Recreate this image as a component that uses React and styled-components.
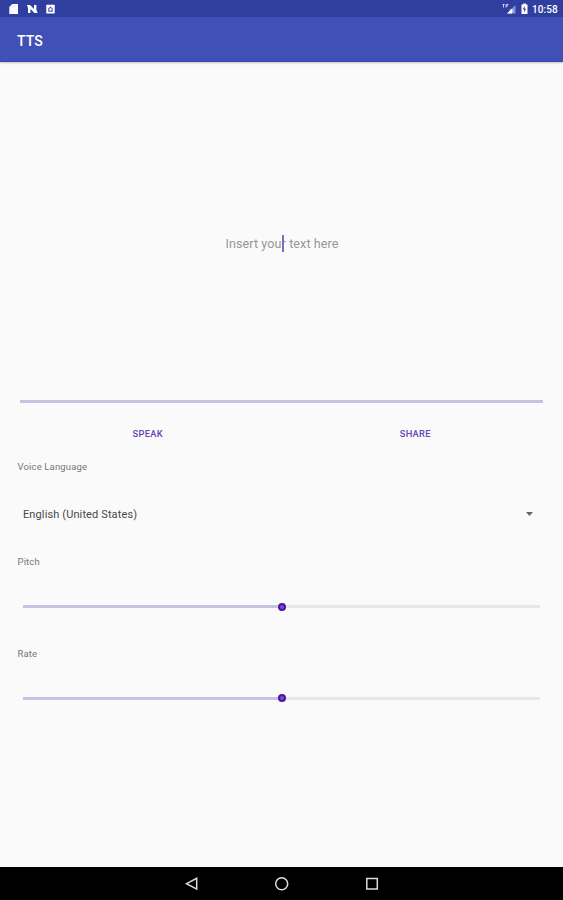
import React from "react";
import styled, { createGlobalStyle } from "styled-components";

const GlobalStyle = createGlobalStyle`
  * { box-sizing: border-box; }
  body { margin: 0; background: #fafafa; font-family: Roboto, sans-serif; }
`;

const Screen = styled.div`
  display: flex;
  flex-direction: column;
  width: 563px;
  height: 900px;
  overflow: hidden;
  background: #fafafa;
`;

const StatusBar = styled.header`
  display: flex;
  justify-content: space-between;
  height: 17px;
  background: #303f9f;
  color: #fff;
`;

const StatusIcons = styled.svg`
  display: block;
  width: ${(p) => p.$width}px;
  height: 17px;
`;

const StatusRight = styled.div`
  display: flex;
  padding-right: 5px;
`;

const Clock = styled.span`
  width: 26px;
  font-size: 10px;
  font-weight: 500;
  line-height: 19px;
  letter-spacing: 0.05px;
  white-space: nowrap;
`;

const AppBar = styled.div`
  height: 45px;
  padding-left: 17px;
  background: #3f51b5;
  border-bottom: 1px solid #3548ae;
  box-shadow: 0 1px 2px rgba(0, 0, 0, 0.22);
`;

const Title = styled.h1`
  margin: 0;
  color: #fff;
  font-size: 14px;
  font-weight: 500;
  line-height: 48px;
  letter-spacing: 0.1px;
`;

const Content = styled.main`
  display: flex;
  flex-direction: column;
  flex: 1;
`;

const Editor = styled.div`
  display: flex;
  align-items: center;
  justify-content: center;
  height: 341px;
  margin: 0 20px;
  padding-top: 25px;
  border-bottom: 3px solid #c7c1e2;
`;

const Placeholder = styled.div`
  position: relative;
  margin-left: 1px;
  color: #969696;
  font-size: 12.5px;
  line-height: 18px;
  letter-spacing: 0.12px;
  white-space: nowrap;
`;

const Caret = styled.span`
  position: absolute;
  left: 50%;
  top: 0;
  width: 2px;
  height: 17px;
  background: #7b6dc0;
`;

const Actions = styled.div`
  display: grid;
  grid-template-columns: 1fr 1fr;
  height: 50px;
  padding: 6px 14px 0;
`;

const ActionButton = styled.button`
  border: 0;
  padding: 0;
  background: transparent;
  color: #6545b7;
  font: 500 9.3px/49px Roboto, sans-serif;
  letter-spacing: 0.3px;
`;

const Field = styled.section`
  height: ${(p) => p.$height}px;
  padding: 0 23px 0 17px;
`;

const Label = styled.div`
  height: 28px;
  padding-left: 0.5px;
  color: #777;
  font-size: 9.5px;
  line-height: 28px;
  letter-spacing: 0.15px;
`;

const Select = styled.div`
  display: flex;
  align-items: center;
  justify-content: space-between;
  height: 66px;
  padding: 0 7px 0 6px;
  color: #484848;
  font-size: 11px;
  letter-spacing: 0.12px;
`;

const Arrow = styled.svg`
  display: block;
  width: 7px;
  height: 4px;
`;

const Slider = styled.div`
  display: flex;
  align-items: center;
  height: 61px;
  padding-left: 6px;
`;

const Track = styled.div`
  flex: 1;
  height: 3px;
  background: ${(p) => (p.$filled ? "#c8c1e2" : "#e6e6e8")};
`;

const Thumb = styled.div`
  width: 8px;
  height: 8px;
  border: 2.5px solid #4c12a8;
  border-radius: 50%;
  background: #7650bc;
`;

const NavBar = styled.nav`
  height: 33px;
  background: #000;
`;

const NavIcons = styled.svg`
  display: block;
  width: 563px;
  height: 33px;
`;

function Range({ label, height }) {
  return (
    <Field $height={height}>
      <Label>{label}</Label>
      <Slider role="slider" aria-label={label} aria-valuenow={50}>
        <Track $filled />
        <Thumb />
        <Track />
      </Slider>
    </Field>
  );
}

export default function App() {
  return (
    <>
      <GlobalStyle />
      <Screen>
        <StatusBar>
          <StatusIcons $width={60} viewBox="0 0 60 17">
            <path d="M12.3 4H18v10H9.3V7z" fill="#fff" />
            <path d="M12 6.5v1.7M14 5.3V7M16 5.3V7" stroke="#b9c0e4" strokeWidth=".7" />
            <path d="M27 5h3l4 4V5h2.4v5l1.3 3h-3.3l-4-4v4H28V8z" fill="#fff" />
            <rect x="46.3" y="4.8" width="8.4" height="8.6" rx=".5" fill="#fff" />
            <path d="M48.2 11.8V8.5l2.3-2 2.3 2v3.3z" fill="#4c5aae" />
            <circle cx="50.5" cy="9.5" r="1.3" fill="#fff" />
          </StatusIcons>
          <StatusRight>
            <StatusIcons $width={30} viewBox="0 0 30 17">
              <path d="M13.5 5v8.5H5z" fill="#8793ce" />
              <path d="M10 8.5v5H5z" fill="#fff" />
              <path d="M.5 4.5h2M1.5 4.5v3M4 4.5h2.5M4 6h2M4 4.5v3" stroke="#dfe2f5" strokeWidth=".9" />
              <path d="M8 9.5l3 3m0-3l-3 3" stroke="#fff" />
              <path d="M19.5 4.5H21.2v-1h2.6v1h1.7V14h-6z" fill="#fff" />
              <path d="M22.8 6l-2 3.3h1.3v3l2-3.6h-1.3z" fill="#303f9f" />
            </StatusIcons>
            <Clock>10:58</Clock>
          </StatusRight>
        </StatusBar>
        <AppBar>
          <Title>TTS</Title>
        </AppBar>
        <Content>
          <Editor>
            <Placeholder>
              Insert your text here
              <Caret />
            </Placeholder>
          </Editor>
          <Actions>
            <ActionButton>SPEAK</ActionButton>
            <ActionButton>SHARE</ActionButton>
          </Actions>
          <Field $height={95}>
            <Label>Voice Language</Label>
            <Select>
              <span>English (United States)</span>
              <Arrow viewBox="0 0 7 4">
                <path d="M0 0h7L3.5 4z" fill="#666" />
              </Arrow>
            </Select>
          </Field>
          <Range label="Pitch" height={91.5} />
          <Range label="Rate" height={92} />
        </Content>
        <NavBar>
          <NavIcons viewBox="0 0 563 33" fill="none" stroke="#ddd" strokeWidth="1.5">
            <path d="M196.7 11.3v10.8L186.5 16.7z" />
            <circle cx="281.7" cy="16.7" r="6" />
            <rect x="366.8" y="11.5" width="10.5" height="10.5" />
          </NavIcons>
        </NavBar>
      </Screen>
    </>
  );
}
